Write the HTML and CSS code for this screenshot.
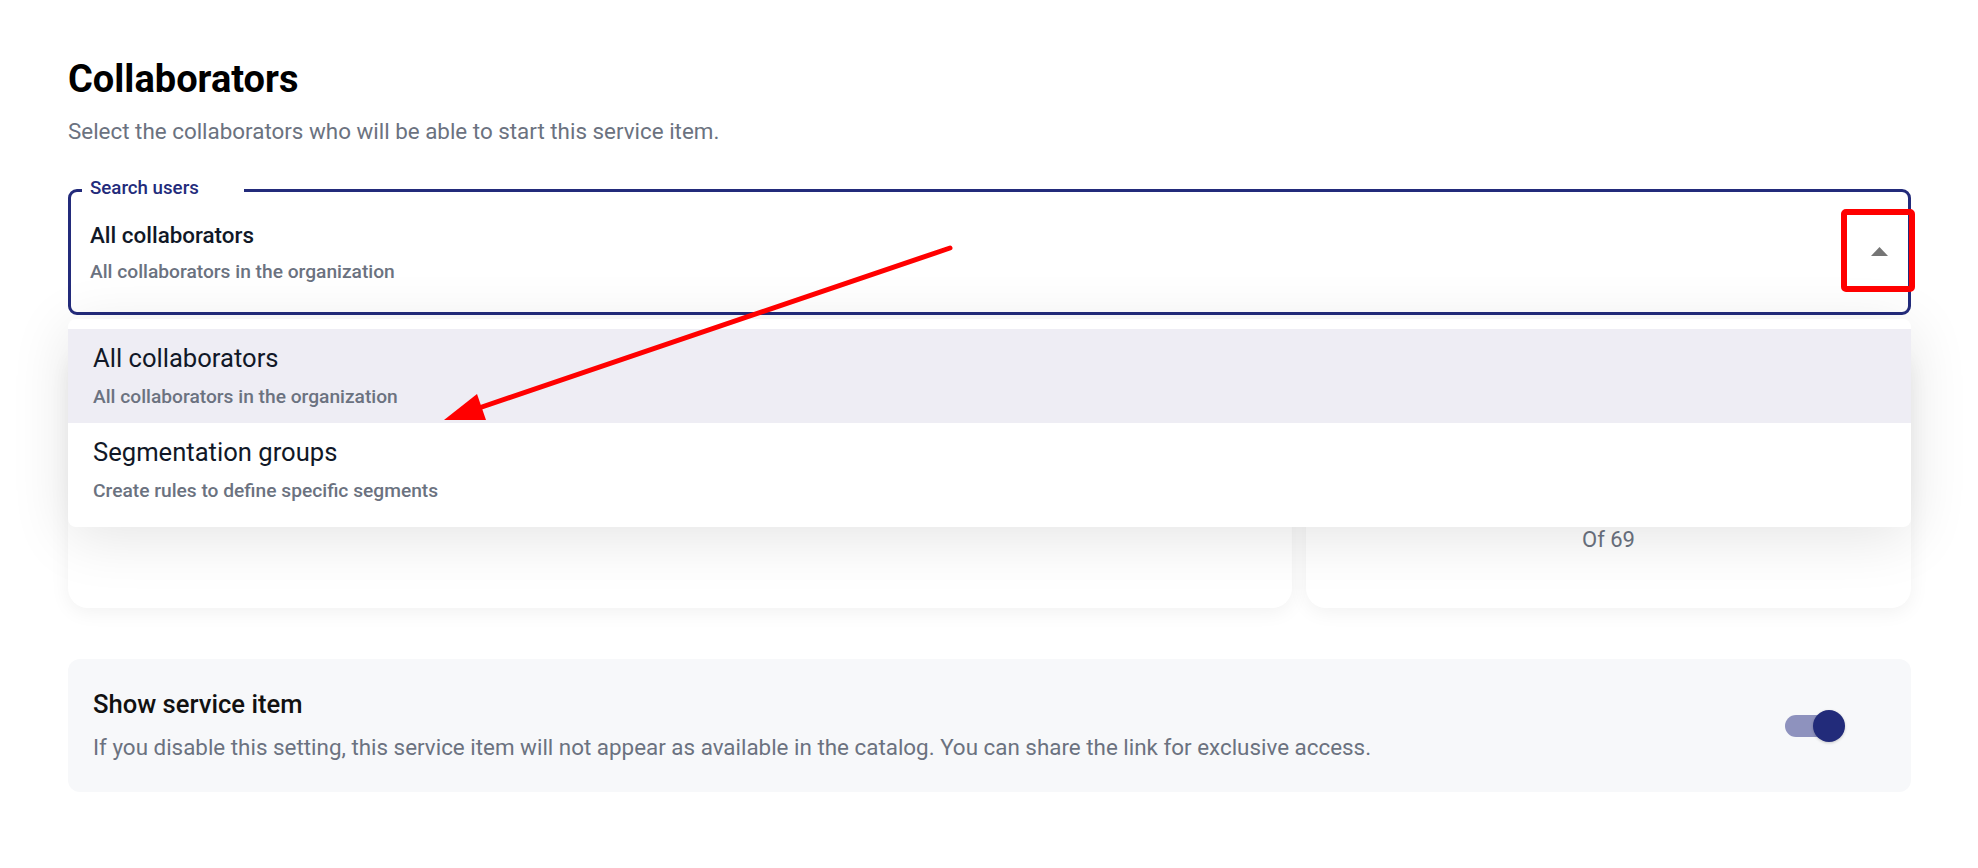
FILE: index.html
```html
<!DOCTYPE html>
<html lang="en">
<head>
<meta charset="utf-8">
<title>Collaborators</title>
<link rel="stylesheet" href="styles.css">
</head>
<body>
<main class="page">
  <section class="section">
    <h1 class="title">Collaborators</h1>
    <p class="subtitle">Select the collaborators who will be able to start this service item.</p>

    <div class="select-wrap">
      <div class="field">
        <span class="field-label">Search users</span>
        <div class="field-value">
          <div class="field-primary">All collaborators</div>
          <div class="field-secondary">All collaborators in the organization</div>
        </div>
        <span class="field-icon">
          <svg width="17" height="9" viewBox="0 0 17 9"><path d="M0 9 L8.5 0 L17 9 Z" fill="#757575"/></svg>
        </span>
      </div>

      <ul class="menu">
        <li class="menu-item is-active">
          <div class="menu-primary">All collaborators</div>
          <div class="menu-secondary">All collaborators in the organization</div>
        </li>
        <li class="menu-item">
          <div class="menu-primary">Segmentation groups</div>
          <div class="menu-secondary">Create rules to define specific segments</div>
        </li>
      </ul>
    </div>

    <div class="cards">
      <div class="card"></div>
      <div class="card card-count">
        <span class="count-of">Of 69</span>
      </div>
    </div>
  </section>

  <section class="setting">
    <div class="setting-text">
      <div class="setting-title">Show service item</div>
      <div class="setting-desc">If you disable this setting, this service item will not appear as available in the catalog. You can share the link for exclusive access.</div>
    </div>
    <div class="switch">
      <span class="switch-track"></span>
      <span class="switch-thumb"></span>
    </div>
  </section>
</main>

<svg class="annotation" width="1978" height="868" viewBox="0 0 1978 868">
  <rect x="1844" y="212" width="68" height="77" rx="2" fill="none" stroke="#ff0000" stroke-width="6"/>
  <line x1="950" y1="248" x2="476" y2="409" stroke="#ff0000" stroke-width="5" stroke-linecap="round"/>
  <polygon points="444,420 486,420 477,394" fill="#ff0000"/>
</svg>
</body>
</html>
```

FILE: styles.css
```css
* { box-sizing: border-box; }

html, body {
  margin: 0;
  padding: 0;
  background: #ffffff;
}

body {
  font-family: Roboto, "Liberation Sans", Arial, sans-serif;
  color: #111827;
  position: relative;
  width: 1978px;
  height: 868px;
  overflow: hidden;
}

.page {
  padding: 55px 67px 0 68px;
}

.title {
  margin: 0;
  font-size: 38px;
  line-height: 48px;
  font-weight: 700;
  color: #000000;
}

.subtitle {
  margin: 15px 0 0;
  font-size: 22.4px;
  line-height: 26px;
  color: #6b7280;
}

.select-wrap {
  position: relative;
  margin-top: 45px;
}

.field {
  position: relative;
  height: 126px;
  border: 3px solid #232b7b;
  border-radius: 9px;
  background: #ffffff;
  display: flex;
  align-items: flex-start;
  padding: 30px 19px 0 19px;
}

.field-label {
  position: absolute;
  top: -15px;
  left: 11px;
  padding: 0 45px 0 8px;
  background: #ffffff;
  font-size: 18.7px;
  line-height: 22px;
  font-weight: 500;
  color: #232b7b;
}

.field-value {
  flex: 1;
}

.field-primary {
  font-size: 22.4px;
  line-height: 26px;
  font-weight: 500;
  color: #111827;
}

.field-secondary {
  margin-top: 13px;
  font-size: 19.2px;
  line-height: 22px;
  font-weight: 500;
  color: #6b7280;
}

.field-icon {
  display: flex;
  margin-top: 25px;
  margin-right: 1px;
}

.menu {
  position: absolute;
  z-index: 5;
  top: calc(100% + 4px);
  left: 0;
  right: 0;
  margin: 0;
  padding: 10px 0 10px;
  list-style: none;
  background: #ffffff;
  border-radius: 8px;
  box-shadow: 0 10px 60px rgba(0, 0, 0, 0.11);
}

.menu-item {
  height: 94px;
  padding: 14px 25px 0;
}

.menu-item.is-active {
  background: #eeedf4;
}

.menu-primary {
  font-size: 25.6px;
  line-height: 30px;
  font-weight: 400;
  color: #111827;
}

.menu-secondary {
  margin-top: 13px;
  font-size: 19.2px;
  line-height: 22px;
  font-weight: 500;
  color: #6b7280;
}

.cards {
  display: grid;
  grid-template-columns: 1fr 605px;
  gap: 14px;
  margin-top: 37px;
}

.card {
  height: 256px;
  background: #ffffff;
  border-radius: 20px;
  box-shadow: 0 4px 20px rgba(0, 0, 0, 0.06);
}

.card-count {
  display: flex;
  flex-direction: column;
  justify-content: flex-end;
  align-items: center;
  padding-bottom: 55px;
}

.count-of {
  font-size: 22px;
  line-height: 26px;
  color: #6b7280;
}

.setting {
  margin-top: 51px;
  height: 133px;
  background: #f7f8fa;
  border-radius: 12px;
  display: flex;
  align-items: flex-start;
  padding: 30px 66px 0 25px;
}

.setting-text {
  flex: 1;
}

.setting-title {
  font-size: 25.6px;
  line-height: 30px;
  font-weight: 500;
  color: #111111;
}

.setting-desc {
  margin-top: 15px;
  font-size: 22.4px;
  line-height: 26px;
  color: #6b7280;
}

.switch {
  position: relative;
  align-self: center;
  margin-top: -30px;
  width: 60px;
  height: 32px;
  display: flex;
  align-items: center;
}

.switch-track {
  width: 54px;
  height: 22px;
  border-radius: 11px;
  background: #8e92be;
}

.switch-thumb {
  position: absolute;
  right: 0;
  top: 0;
  width: 32px;
  height: 32px;
  border-radius: 50%;
  background: #222b7a;
  box-shadow: 0 1px 3px rgba(0, 0, 0, 0.2);
}

.annotation {
  position: absolute;
  left: 0;
  top: 0;
  z-index: 10;
  pointer-events: none;
}
```
